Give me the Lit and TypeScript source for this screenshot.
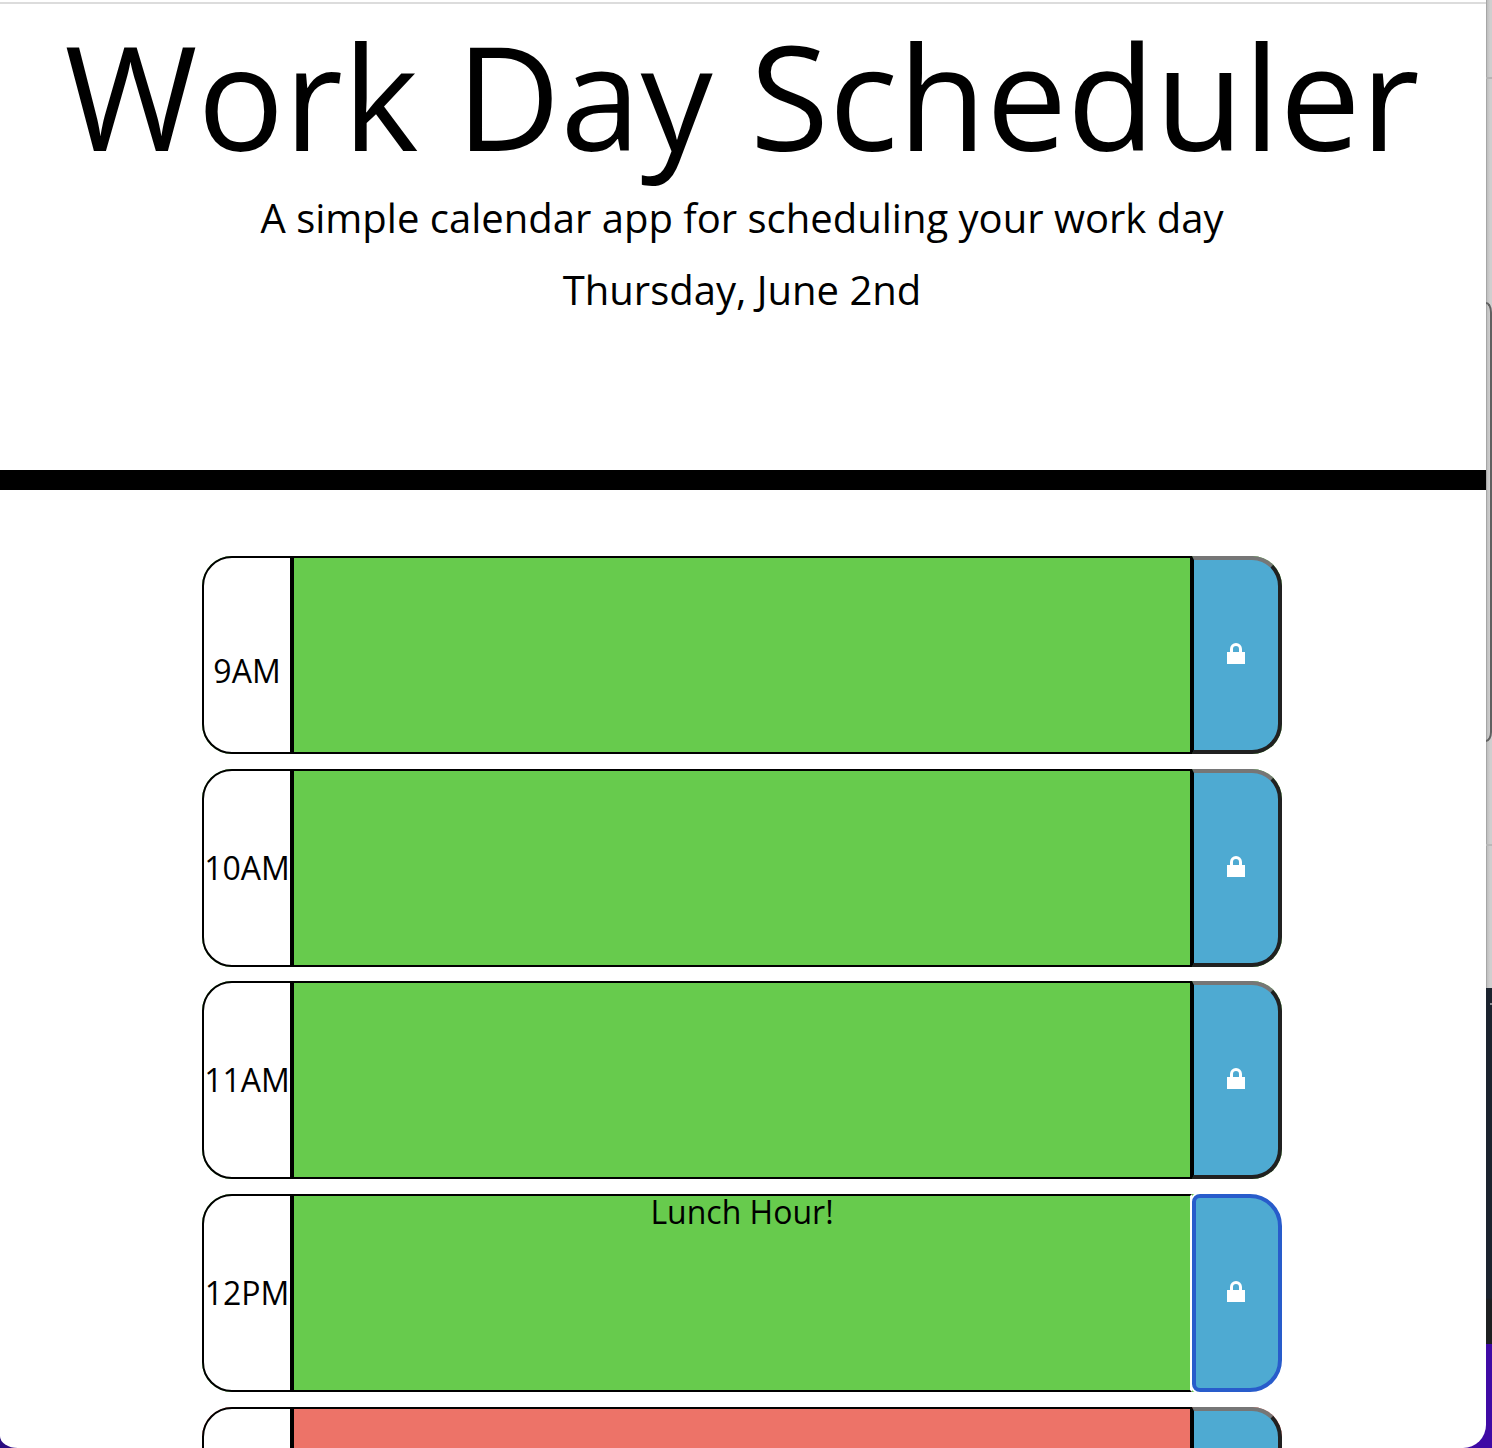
import { LitElement, html, css } from "lit";
import { customElement, property } from "lit/decorators.js";
import { classMap } from "lit/directives/class-map.js";

interface Slot {
  hour: string;
  note: string;
  phase: "past" | "present";
  low?: boolean;
  focused?: boolean;
}

const SLOTS: Slot[] = [
  { hour: "9AM", note: "", phase: "past", low: true },
  { hour: "10AM", note: "", phase: "past" },
  { hour: "11AM", note: "", phase: "past" },
  { hour: "12PM", note: "Lunch Hour!", phase: "past", focused: true },
  { hour: "", note: "", phase: "present" },
];

@customElement("time-block")
export class TimeBlock extends LitElement {
  @property({ attribute: false }) slotData!: Slot;

  static styles = css`
    :host {
      display: block;
      height: 198px;
    }
    .row {
      display: grid;
      grid-template-columns: 90px 900px 90px;
      height: 198px;
      border-radius: 30px;
      font-size: 32px;
      line-height: 36px;
      text-align: center;
    }
    .past {
      background: #67cb4d;
    }
    .present {
      background: #ed7368;
    }
    .hour {
      box-sizing: border-box;
      border: 2px solid #000;
      border-radius: 30px 0 0 30px;
      background: #fff;
      padding-top: 79px;
      white-space: nowrap;
      display: flex;
      justify-content: center;
    }
    .low {
      padding-top: 95px;
    }
    .note {
      box-sizing: border-box;
      border: 2px solid #000;
      background: inherit;
      line-height: 32px;
    }
    .save {
      box-sizing: border-box;
      margin: 0;
      padding: 0 0 4px;
      border-style: solid;
      border-width: 4px 4px 4px 2px;
      border-color: #767676 #212121 #212121 #000;
      border-radius: 0 30px 30px 0;
      background: #4eaad2;
      display: flex;
      align-items: center;
      justify-content: center;
    }
    .focused .note {
      border-right-color: #fff;
    }
    .focused .save {
      border: 4px solid #285ccb;
      border-radius: 8px 32px 32px 8px;
      box-shadow: 0 0 0 2px #fff;
      padding-right: 2px;
    }
    svg {
      display: block;
      width: 18px;
      height: 22px;
    }
  `;

  render() {
    const s = this.slotData;
    return html`
      <div class=${classMap({ row: true, [s.phase]: true, focused: !!s.focused })}>
        <div class=${classMap({ hour: true, low: !!s.low })}>${s.hour}</div>
        <div class="note">${s.note}</div>
        <button class="save" aria-label="Save">
          <svg viewBox="0 0 18 22">
            <path d="M4.5 10V7a4.5 4.5 0 0 1 9 0v3" fill="none" stroke="#fff" stroke-width="3" />
            <path d="M0 10h18v12H0z" fill="#fff" />
          </svg>
        </button>
      </div>
    `;
  }
}

@customElement("app-root")
export class AppRoot extends LitElement {
  static styles = css`
    :host {
      display: block;
      font-family: "Open Sans", sans-serif;
      color: #000;
    }
    .desktop {
      display: grid;
      grid-template-columns: 1486px 6px;
      height: 1448px;
      overflow: hidden;
      background: linear-gradient(90deg, #2b0b80 50%, #3f0aa5 50%);
    }
    .window {
      height: 1448px;
      overflow: hidden;
      background: #fff;
      border-radius: 0 0 23px 18px / 0 0 23px 12px;
    }
    .header {
      box-sizing: border-box;
      height: 490px;
      border-bottom: 20px solid #000;
      text-align: center;
      padding: 2px 2px 0 0;
    }
    .toolbar-edge {
      height: 2px;
      margin-right: -2px;
      background: #dcdcdc;
    }
    h1 {
      margin: 0;
      padding-top: 5px;
      font-size: 144px;
      font-weight: 400;
      line-height: 173px;
      white-space: nowrap;
    }
    p {
      margin: 6px 0 0;
      font-size: 40px;
      line-height: 60px;
    }
    .day {
      margin-top: 12px;
    }
    .blocks {
      display: flex;
      flex-direction: column;
      gap: 14.7px;
      width: 1080px;
      padding: 66px 0 0 202px;
    }
    .edge {
      display: flex;
      flex-direction: column;
      height: 1448px;
      background: #3f0aa5;
    }
    .panel {
      box-sizing: border-box;
      flex: none;
      background: linear-gradient(90deg, #a6a6a6 1px, #bebebe 1px, #cfcfcf 4px);
    }
    .top {
      height: 77px;
    }
    .mid {
      height: 767px;
      border-top: 2px solid #b5b5b5;
      padding-top: 223px;
    }
    .card {
      box-sizing: border-box;
      height: 440px;
      border: solid #606060;
      border-width: 2px 2px 2px 0;
      border-radius: 0 7px 7px 0 / 0 12px 12px 0;
    }
    .bottom {
      height: 144px;
      border-top: 2px solid #b9b9b9;
    }
    .dark {
      flex: none;
      height: 356px;
      background: linear-gradient(#1b232e 0 310px, #1d1f21 312px);
    }
    .tick {
      height: 2px;
      margin: 0 0 0 4px;
      background: #8d9298;
      transform: translateY(15px);
    }
  `;

  render() {
    return html`
      <div class="desktop">
        <main class="window">
          <header class="header">
            <div class="toolbar-edge"></div>
            <h1>Work Day Scheduler</h1>
            <p>A simple calendar app for scheduling your work day</p>
            <p class="day">Thursday, June 2nd</p>
          </header>
          <section class="blocks">
            ${SLOTS.map((s) => html`<time-block .slotData=${s}></time-block>`)}
          </section>
        </main>
        <div class="edge">
          <div class="panel top"></div>
          <div class="panel mid"><div class="card"></div></div>
          <div class="panel bottom"></div>
          <div class="dark"><div class="tick"></div></div>
        </div>
      </div>
    `;
  }
}
